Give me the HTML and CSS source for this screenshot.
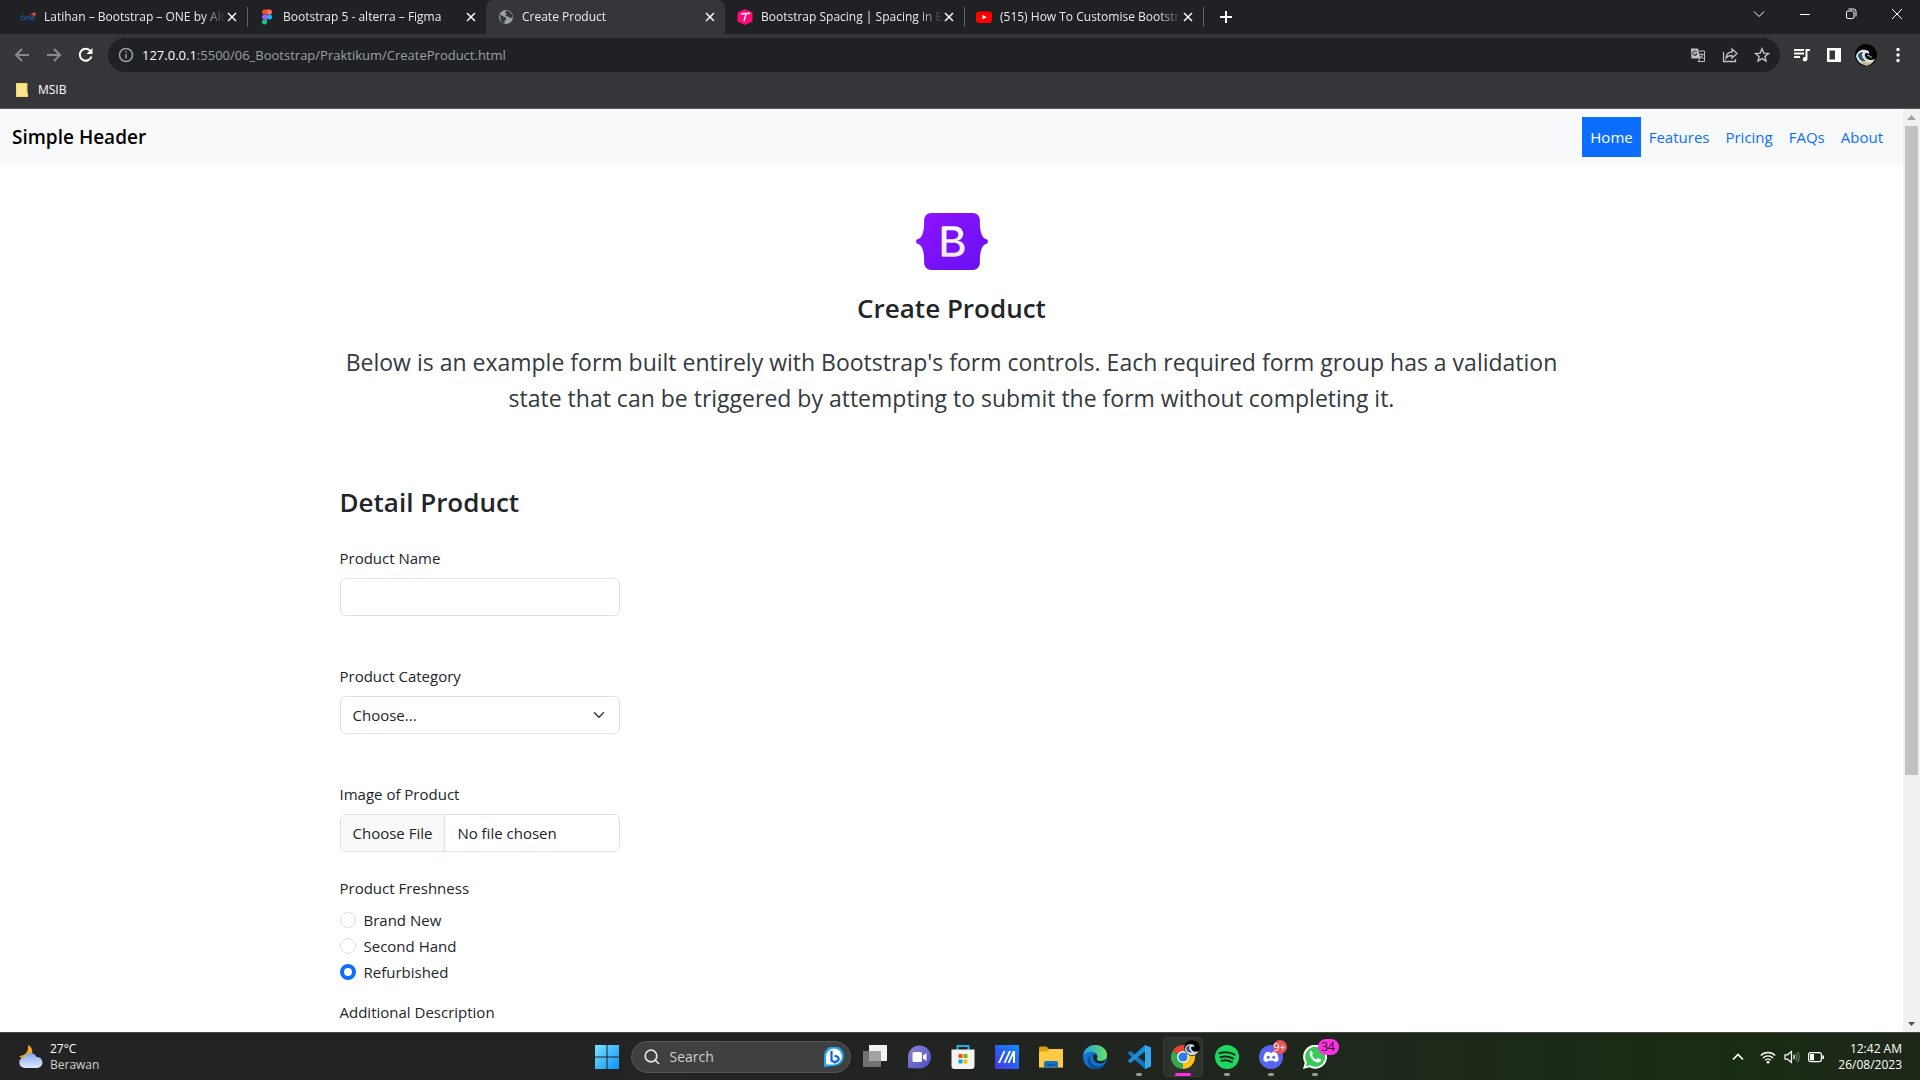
FILE: index.html
```html
<!DOCTYPE html>
<html lang="en">
<head>
<meta charset="utf-8">
<meta name="viewport" content="width=device-width, initial-scale=1">
<title>Create Product</title>
<link rel="stylesheet" href="styles.css">
</head>
<body>
<div class="tabstrip">
  <div class="tab">
    <svg class="favicon" viewBox="0 0 16 16"><g fill="none" stroke="#1f4675" stroke-width="1.6"><circle cx="3" cy="9" r="2"/><path d="M6.8 11.500V9a1.600 1.600 0 0 1 3.200 0v2.500M11.500 9h3.300a1.700 1.700 0 1 0-.8 1.800"/></g><path d="M10 5.500 15.500 3v4z" fill="#e0533a"/></svg>
    <button class="tab-title">Latihan – Bootstrap – ONE by Alt</button>
    <button class="tab-close" aria-label="Close tab"><svg viewBox="0 0 10 10"><path d="m1 1 8 8M9 1 1 9"/></svg></button>
  </div>
  <div class="tab divided">
    <svg class="favicon" viewBox="0 0 16 16"><path d="M3 3a2.500 2.500 0 0 1 2.500-2.500H8v5H5.500A2.500 2.500 0 0 1 3 3z" fill="#f24e1e"/><path d="M8 .5h2.500a2.500 2.500 0 0 1 0 5H8z" fill="#ff7262"/><path d="M3 8a2.500 2.500 0 0 1 2.500-2.500H8v5H5.500A2.500 2.500 0 0 1 3 8z" fill="#a259ff"/><circle cx="10.500" cy="8" r="2.500" fill="#1abcfe"/><path d="M3 13a2.500 2.500 0 0 1 2.500-2.500H8V13a2.500 2.500 0 0 1-5 0z" fill="#0acf83"/></svg>
    <button class="tab-title">Bootstrap 5 - alterra – Figma</button>
    <button class="tab-close" aria-label="Close tab"><svg viewBox="0 0 10 10"><path d="m1 1 8 8M9 1 1 9"/></svg></button>
  </div>
  <div class="tab active">
    <svg class="favicon" viewBox="0 0 16 16"><circle cx="8" cy="8" r="7" fill="#9aa0a6"/><path d="M2.500 5.500 6 8l2 .5v2L6.500 12v2.500C3.500 14 1.500 11 2.500 5.500zM8.500 1.500 7 3.500l1.500 1L7.500 7l2.500.5 2 1.500 2.500-.5C14.800 5 12 2 8.500 1.500z" fill="#35363a"/></svg>
    <button class="tab-title">Create Product</button>
    <button class="tab-close" aria-label="Close tab"><svg viewBox="0 0 10 10"><path d="m1 1 8 8M9 1 1 9"/></svg></button>
  </div>
  <div class="tab">
    <svg class="favicon" viewBox="0 0 16 16"><path d="m8 0 7.500 3.500v9L8 16 .5 12.500v-9z" fill="#ff0a78"/><path d="M4 5.500C6 3.500 9 5.500 13 4M9 4.800 7 12" fill="none" stroke="#fff" stroke-width="1.400"/></svg>
    <button class="tab-title">Bootstrap Spacing | Spacing in Bo</button>
    <button class="tab-close" aria-label="Close tab"><svg viewBox="0 0 10 10"><path d="m1 1 8 8M9 1 1 9"/></svg></button>
  </div>
  <div class="tab divided">
    <svg class="favicon" viewBox="0 0 16 16"><rect y="2.500" width="16" height="11.500" rx="3" fill="red"/><path d="m6.500 5.800 4.200 2.400-4.200 2.400z" fill="#fff"/></svg>
    <button class="tab-title">(515) How To Customise Bootstra</button>
    <button class="tab-close" aria-label="Close tab"><svg viewBox="0 0 10 10"><path d="m1 1 8 8M9 1 1 9"/></svg></button>
  </div>
  <button class="new-tab divided" aria-label="New tab"><svg viewBox="0 0 14 14"><path d="M7 1v12M1 7h12"/></svg></button>
  <div class="window-controls">
    <button aria-label="Search tabs"><svg viewBox="0 0 12 12"><path d="m1 3.500 5 5 5-5"/></svg></button>
    <button aria-label="Minimize"><svg viewBox="0 0 12 12"><path d="M1 6.500h10"/></svg></button>
    <button aria-label="Restore"><svg viewBox="0 0 12 12"><rect x="1.500" y="3" width="7.500" height="7.500" rx="1.500"/><path d="M3.500 1h5a2.500 2.500 0 0 1 2.500 2.500V8.500"/></svg></button>
    <button aria-label="Close window"><svg viewBox="0 0 12 12"><path d="m1 1 10 10M11 1 1 11"/></svg></button>
  </div>
</div>

<div class="toolbar">
  <div class="tools nav-tools">
    <button class="dim" aria-label="Back"><svg viewBox="0 0 16 16"><path d="M15 8H2M8 2 2 8l6 6"/></svg></button>
    <button class="dim" aria-label="Forward"><svg viewBox="0 0 16 16"><path d="M1 8h13M8 2l6 6-6 6"/></svg></button>
    <button aria-label="Reload"><svg viewBox="0 0 16 16"><path d="M13.500 9.500A6 6 0 1 1 12.500 4"/><path d="M14.500 1v6h-6z" fill="#fff" stroke="none"/></svg></button>
  </div>
  <div class="omnibox">
    <svg class="info" viewBox="0 0 16 16"><circle cx="8" cy="8" r="6.500"/><path d="M8 7v4.500M8 4.200v1.600"/></svg>
    <span class="host">127.0.0.1</span>
    <input class="url" type="text" aria-label="Address" value=":5500/06_Bootstrap/Praktikum/CreateProduct.html">
    <div class="tools page-tools">
      <button aria-label="Translate"><svg viewBox="0 0 16 16"><path d="M1 1.500h7l2.500 10H1.500z" fill="#bdc1c6" stroke="none"/><path d="M9 4h5.500v10.500H8l2-3M9.500 7.500h4M11.500 6.500v1M13 7.500c-.5 2-1.500 3-3 4M10.500 9l3 3" stroke-width="1"/><path d="M6.800 5A2.200 2.200 0 1 0 7 7H5" stroke="#202124" stroke-width="1"/></svg></button>
      <button aria-label="Share"><svg viewBox="0 0 16 16"><path d="M1.500 5v9.500h12V12M4 11c.5-4 3-6 6-6V2l5 4.500-5 4.500V8.500C7.500 8.500 5.500 9 4 11z" stroke-width="1.300"/></svg></button>
      <button aria-label="Bookmark this tab"><svg viewBox="0 0 16 16"><path d="m8 1.800 1.800 4.300 4.700.4-3.600 3 1.100 4.600L8 11.600l-4 2.500 1.100-4.600-3.600-3 4.700-.4z" stroke-width="1.400"/></svg></button>
    </div>
  </div>
  <div class="tools end-tools">
    <button aria-label="Media controls"><svg viewBox="0 0 16 16"><path d="M0 3h10M0 6.500h10M0 10h6M12.500 12V3H16"/><circle cx="11" cy="12.300" r="2.200" fill="#fff" stroke="none"/></svg></button>
    <button aria-label="Side panel"><svg viewBox="0 0 16 16"><path d="M1 1h14v14H1zM3.500 3.500v9H9v-9z" fill="#fff" fill-rule="evenodd" stroke="none"/></svg></button>
    <button aria-label="Profile"><svg class="avatar" viewBox="0 0 22 22"><circle cx="11" cy="11" r="11" fill="#050505"/><path d="M1 12c1-4 5-7 9-6 3 0 5 2 4 4-2-2-5-1-4 2 1 4 6 5 10 3-2 4-5 6-9 6-5 0-9-4-10-9z" fill="#dfe7e6"/><path d="M3 12c0-3 3-4 5-4-2 3-1 6 3 9-4 1-7-1-8-5z" fill="#2c5678"/><path d="m12 12 2-1 1 2 2 0" fill="none" stroke="#9db7c4" stroke-width="1"/><path d="m5 18 4-1 5 2 4-2-2 3-5 2z" fill="#c9b98d"/></svg></button>
    <button aria-label="Menu"><svg viewBox="0 0 16 16"><g fill="#fff" stroke="none"><circle cx="8" cy="2.500" r="1.700"/><circle cx="8" cy="8" r="1.700"/><circle cx="8" cy="13.500" r="1.700"/></g></svg></button>
  </div>
</div>

<div class="bookmarks">
  <a class="bookmark" href="#"><svg viewBox="0 0 12 14"><path d="M0 0h11v10h1v4H0z" fill="#ffe48f"/><path d="M0 0h11v10h1v4H0z" fill="none" stroke="#e9c74c"/></svg>MSIB</a>
</div>

<div class="viewport">
  <div class="page">
    <header class="header">
      <a class="brand" href="#">Simple Header</a>
      <nav class="nav">
        <a class="nav-link current" href="#">Home</a>
        <a class="nav-link" href="#">Features</a>
        <a class="nav-link" href="#">Pricing</a>
        <a class="nav-link" href="#">FAQs</a>
        <a class="nav-link" href="#">About</a>
      </nav>
    </header>
    <main class="container">
      <section class="intro">
        <svg class="logo" viewBox="0 0 118 94" role="img" aria-label="Bootstrap">
          <defs>
            <linearGradient id="logo-bg" x1="0" y1="0" x2="1" y2="1"><stop offset="0" stop-color="#9013fe"/><stop offset="1" stop-color="#6610f2"/></linearGradient>
            <linearGradient id="logo-letter" x1="0" y1="0" x2="0" y2="1"><stop offset="0" stop-color="#fff"/><stop offset="1" stop-color="#f1e5fc"/></linearGradient>
          </defs>
          <path d="M24.509 0c-6.733 0-11.715 5.893-11.492 12.284.214 6.140-.064 14.092-2.066 20.577C8.943 39.365 5.547 43.485 0 44.014v5.972c5.547.529 8.943 4.649 10.951 11.153 2.002 6.485 2.280 14.437 2.066 20.577C12.794 88.106 17.776 94 24.510 94H93.500c6.733 0 11.714-5.893 11.491-12.284-.214-6.140.064-14.092 2.066-20.577 2.009-6.504 5.396-10.624 10.943-11.153v-5.972c-5.547-.529-8.934-4.649-10.943-11.153-2.002-6.484-2.280-14.437-2.066-20.577C105.214 5.894 100.233 0 93.500 0z" fill="url(#logo-bg)"/>
          <path d="M80 57.863C80 66.663 73.436 72 62.543 72H44a2 2 0 0 1-2-2V24a2 2 0 0 1 2-2h18.437c9.083 0 15.044 4.920 15.044 12.474 0 5.302-4.010 10.049-9.119 10.880v.277C75.317 46.394 80 51.210 80 57.863zM60.521 28.340H49.948v14.934h8.905c6.884 0 10.680-2.772 10.680-7.727 0-4.643-3.264-7.207-9.012-7.207zM49.948 49.200v16.458H60.910c7.167 0 10.964-2.876 10.964-8.281 0-5.406-3.903-8.178-11.425-8.178z" fill="url(#logo-letter)"/>
        </svg>
        <h1 class="title">Create Product</h1>
        <p class="lead">Below is an example form built entirely with Bootstrap's form controls. Each required form group has a validation state that can be triggered by attempting to submit the form without completing it.</p>
      </section>
      <form class="form">
        <h2 class="title">Detail Product</h2>
        <div class="field">
          <label for="name">Product Name</label>
          <input class="control" id="name" type="text">
        </div>
        <div class="field">
          <label for="category">Product Category</label>
          <select class="control select" id="category"><option>Choose...</option></select>
        </div>
        <div class="field">
          <label for="image">Image of Product</label>
          <input class="control file" id="image" type="file">
        </div>
        <fieldset class="choices">
          <legend>Product Freshness</legend>
          <label class="choice"><input type="radio" name="freshness">Brand New</label>
          <label class="choice"><input type="radio" name="freshness">Second Hand</label>
          <label class="choice"><input type="radio" name="freshness" checked>Refurbished</label>
        </fieldset>
        <div class="field">
          <label for="description">Additional Description</label>
          <textarea class="control" id="description" rows="4"></textarea>
        </div>
      </form>
    </main>
  </div>
  <div class="scrollbar" aria-hidden="true">
    <svg viewBox="0 0 17 17"><path d="M4 11h9L8.500 6z" fill="#a3a3a3"/></svg>
    <div class="track"><div class="thumb"></div></div>
    <svg viewBox="0 0 17 17"><path d="M5 7h7l-3.500 4z" fill="#505050"/></svg>
  </div>
</div>

<footer class="taskbar">
  <button class="weather">
    <svg viewBox="0 0 24 24"><defs><linearGradient id="cloud" x1="0" y1="0" x2="0" y2="1"><stop offset="0" stop-color="#7fa6ee"/><stop offset="1" stop-color="#dfe9ff"/></linearGradient></defs><path d="M9 0c5 2 5 8 3 11s-8 4-12 0c6 0 10-4 9-11z" fill="#f5a81c"/><path d="M6 23a5.500 5.500 0 0 1-.5-11A6.500 6.500 0 0 1 17.500 12 5.500 5.500 0 0 1 18.500 23z" fill="url(#cloud)"/></svg>
    <span class="lines"><span>27°C</span><span class="soft">Berawan</span></span>
  </button>
  <div class="apps">
    <button class="app" aria-label="Start"><svg viewBox="0 0 24 24"><defs><linearGradient id="win" x1="0" y1="0" x2="1" y2="1"><stop offset="0" stop-color="#7ce0ff"/><stop offset="1" stop-color="#0a93f5"/></linearGradient></defs><path d="M0 0h11.500v11.500H0zM12.500 0H24v11.500H12.500zM0 12.500h11.500V24H0zM12.500 12.500H24V24H12.500z" fill="url(#win)"/></svg></button>
    <div class="search">
      <svg class="glass" viewBox="0 0 16 16"><circle cx="7" cy="7" r="5.800"/><path d="m11 11 4 4"/></svg>
      <input type="search" aria-label="Search" placeholder="Search">
      <svg class="bing" viewBox="0 0 20 20"><path d="M0 20V10a10 10 0 1 1 10 9z" fill="#1aa5f0"/><path d="M2 17.500V10a8 8 0 1 1 8 7.500z" fill="#fff"/><path d="M7.500 4v9.500l3.500 2 3.500-2.500c1-2-1-3.500-4-4.500" fill="none" stroke="#1763d8" stroke-width="2.200"/></svg>
    </div>
    <button class="app" aria-label="Task view"><svg viewBox="0 0 24 24"><path d="M6 0h18v16H6z" fill="#f2f2f2"/><path d="M0 6h18v16H0z" fill="#727272"/><path d="M6 6h12v10H6z" fill="#a3a3a3"/></svg></button>
    <button class="app" aria-label="Chat"><svg viewBox="0 0 24 24"><defs><linearGradient id="chat" x1="0" y1="0" x2="1" y2="1"><stop offset="0" stop-color="#8f86d0"/><stop offset="1" stop-color="#4a4bc4"/></linearGradient></defs><path d="M1 23V12A11.500 11.500 0 1 1 12 23.500z" fill="url(#chat)"/><rect x="5.500" y="7" width="9.500" height="10" rx="1.500" fill="#fff"/><path d="m16 10.500 3.500-2.500v8L16 13.500z" fill="#fff"/></svg></button>
    <button class="app" aria-label="Microsoft Store"><svg viewBox="0 0 24 24"><path d="M6.500 5V1h11v4" fill="none" stroke="#23aeea" stroke-width="2"/><path d="M.5 4.500h23V21a3 3 0 0 1-3 3h-17a3 3 0 0 1-3-3z" fill="#f3f3f3"/><path d="M7.500 9h4v4h-4z" fill="#f25022"/><path d="M12.500 9h4v4h-4z" fill="#7fba00"/><path d="M7.500 14.500h4v4h-4z" fill="#00a4ef"/><path d="M12.500 14.500h4v4h-4z" fill="#ffb900"/></svg></button>
    <button class="app" aria-label="MyASUS"><svg viewBox="0 0 24 24"><defs><linearGradient id="asus" x1="0" y1="1" x2="1" y2="0"><stop offset="0" stop-color="#4334e8"/><stop offset="1" stop-color="#118dff"/></linearGradient></defs><path d="M0 0h24v24H0z" fill="url(#asus)"/><path d="m3 18 5.500-12h2L5 18zM8.500 18 14 6h2l-5.500 12zM12.500 18 18 6h2v12h-2v-7.500L14.500 18z" fill="#fff"/></svg></button>
    <button class="app" aria-label="File Explorer"><svg viewBox="0 0 24 24"><path d="M0 8V3a1.500 1.500 0 0 1 1.500-1.500h6L10 4v4z" fill="#e09c10"/><path d="M0 6.500h8L10.500 4H24v18.500H0z" fill="#fdcb45"/><path d="M5 22.500V18a2 2 0 0 1 2-2h10a2 2 0 0 1 2 2v4.500z" fill="#1372c4"/><path d="M8 19h8v1.500H8z" fill="#0b4f94"/></svg></button>
    <button class="app" aria-label="Edge"><svg viewBox="0 0 24 24"><defs><linearGradient id="edge" x1="0" y1="0" x2="1" y2="0"><stop offset="0" stop-color="#229ee8"/><stop offset="1" stop-color="#66e05c"/></linearGradient></defs><circle cx="12" cy="12" r="12" fill="#1273cc"/><path d="M0 11C1 4 6 0 12 0c7 0 12 4.500 12 10 0 4-3 6-6.500 6-3 0-4.500-1.500-3.500-3 2-4-3-7-7-6C3 7.500 1 9 0 11z" fill="url(#edge)"/><path d="M8 10c-3 5 1 11 7 11.500 3 0 5-1 7.500-3-4 6.500-11 6.500-15 3.500C3 18.500 4 12 8 10z" fill="#0c4f99"/><path d="M10.500 9.500c2-1 5 1 3.500 3.500-1 1.500.5 3 3.500 3 2 0 4-.5 5.500-2-.5 3-3 4.500-6 4.500-5 0-8.500-5-6.500-9z" fill="#20241e"/></svg></button>
    <button class="app running" aria-label="Visual Studio Code"><svg viewBox="0 0 24 24"><path d="M1 7.500 3.500 6 18 17.500V24L1.500 9z" fill="#1279bd"/><path d="M1 16.500 3.500 18 18 6.500V0L1.500 15z" fill="#1b8ed8"/><path d="m18 0 6 2.500v19L18 24z" fill="#35a8f0"/></svg></button>
    <button class="app running focused" aria-label="Chrome"><svg viewBox="0 0 24 24"><path d="M12 12 1.600 6A12 12 0 0 1 22.400 6z" fill="#ea4335"/><path d="M12 12 22.400 6A12 12 0 0 1 12 24z" fill="#fbc116"/><path d="M12 12v12A12 12 0 0 1 1.600 6z" fill="#34a853"/><circle cx="12" cy="12" r="6" fill="#fff"/><circle cx="12" cy="12" r="4.600" fill="#2a7de9"/></svg><svg class="badge profile" viewBox="0 0 22 22"><circle cx="11" cy="11" r="11" fill="#050505"/><path d="M1 12c1-4 5-7 9-6 3 0 5 2 4 4-2-2-5-1-4 2 1 4 6 5 10 3-2 4-5 6-9 6-5 0-9-4-10-9z" fill="#cfdcdf"/><path d="M3 12c0-3 3-4 5-4-2 3-1 6 3 9-4 1-7-1-8-5z" fill="#2c5678"/></svg></button>
    <button class="app running" aria-label="Spotify"><svg viewBox="0 0 24 24"><circle cx="12" cy="12" r="12" fill="#1ed760"/><path d="M4.500 8.300C9.500 6.800 15.500 7.300 19.500 9.700M5.500 12.200c4.500-1.200 9-.8 12.700 1.400M6.500 15.800c3.500-1 7.500-.6 10.500 1.200" fill="none" stroke="#152a1b" stroke-width="2" stroke-linecap="round"/></svg></button>
    <button class="app running" aria-label="Discord"><svg viewBox="0 0 24 24"><circle cx="12" cy="12" r="12" fill="#5865f2"/><path d="M6.500 7.500 10 6.500l.7 1.200h2.600l.7-1.200 3.500 1c1.500 2.500 2.200 5 2 8-1.500 1.200-2.500 1.500-3.500 1.800l-1-1.500H9l-1 1.500c-1-.3-2-.6-3.500-1.800-.2-3 .5-5.500 2-8z" fill="#fff"/><circle cx="9.300" cy="12.300" r="1.500" fill="#5865f2"/><circle cx="14.700" cy="12.300" r="1.500" fill="#5865f2"/></svg><span class="badge alert">9+</span></button>
    <button class="app running" aria-label="WhatsApp"><svg viewBox="0 0 24 24"><path d="m0 24 1.700-6.200A12 12 0 1 1 6.300 22.300z" fill="#fff"/><path d="m2.800 21.200 1.100-3.800a10 10 0 1 1 3 2.900z" fill="#38c956"/><path d="M7 6.500c1-1 2-.5 2.500 1l.5 1.500-1 1.500c1 2 2.500 3.300 4.500 4l1.500-1.500 3 1.500c.3 2-1.500 3-3.500 3C10 17 5.500 11 7 6.500z" fill="#fff"/></svg><span class="badge count">34</span></button>
  </div>
  <div class="tray">
    <button class="tray-more" aria-label="Show hidden icons"><svg viewBox="0 0 16 16"><path d="m3 10.500 5-5 5 5" stroke-width="1.700"/></svg></button>
    <button class="tray-status" aria-label="Network, volume and battery">
      <svg viewBox="0 0 16 16"><path d="M.8 6.500a10.200 10.200 0 0 1 14.400 0M3 9a7 7 0 0 1 10 0M5.200 11.300a4 4 0 0 1 5.600 0" stroke-width="1.300"/><circle cx="8" cy="13.200" r="1.400" fill="#fff" stroke="none"/></svg>
      <svg viewBox="0 0 16 16"><path d="M1 5.800h2.500L7.500 2.500v11l-4-3.300H1zM9.500 6a3 3 0 0 1 0 4"/><path d="M11.500 4.500a5.500 5.500 0 0 1 0 7M13.500 3a8 8 0 0 1 0 10" stroke="#72806d"/></svg>
      <svg viewBox="0 0 16 16"><rect x=".6" y="3.600" width="12.800" height="9" rx="2"/><path d="M2 5h4v6.200H2zM14.300 6.500H16v3.500h-1.700z" fill="#fff" stroke="none"/></svg>
    </button>
    <button class="clock lines"><span>12:42 AM</span><span>26/08/2023</span></button>
  </div>
</footer>
</body>
</html>
```
FILE: styles.css
```css
*, *::before, *::after { box-sizing: border-box; }

body {
  margin: 0;
  height: 100vh;
  display: flex;
  flex-direction: column;
  overflow: hidden;
  font: 15px/24px "Segoe UI", "Open Sans", "Noto Sans", sans-serif;
  color: #212529;
  background: #fff;
}

button { padding: 0; border: 0; background: none; color: inherit; font: inherit; }
a { color: inherit; text-decoration: none; }
svg { display: block; flex: none; }

/* Tab strip */
.tabstrip { display: flex; flex: none; height: 34px; padding-left: 8px; background: #202124; color: #e8eaed; }
.tab { position: relative; display: flex; align-items: center; width: 239px; padding: 0 9px 0 12px; }
.tab.active { background: #35363a; border-radius: 8px 8px 0 0; }
.divided::before { content: ""; position: absolute; left: 0; top: 7px; width: 1px; height: 20px; background: #5f6368; }
.favicon { width: 16px; height: 16px; margin-right: 8px; }
.tab-title {
  flex: 1;
  min-width: 0;
  overflow: hidden;
  text-align: left;
  font-size: 12px;
  line-height: 16px;
  white-space: nowrap;
  -webkit-mask-image: linear-gradient(90deg, #000 calc(100% - 24px), transparent);
  mask-image: linear-gradient(90deg, #000 calc(100% - 24px), transparent);
}
.tab-close { width: 12px; height: 12px; display: grid; place-items: center; }
.tab-close svg { width: 10px; height: 10px; }
.new-tab { position: relative; width: 46px; display: grid; place-items: center; }
.new-tab svg { width: 14px; height: 14px; }
.tab-close path, .new-tab path { fill: none; stroke: #fff; stroke-width: 2; }
.tab-close path { stroke-width: 1.500; }
.window-controls { display: flex; margin-left: auto; height: 28px; }
.window-controls button { width: 46px; display: grid; place-items: center; }
.window-controls svg { width: 12px; height: 12px; fill: none; stroke: #fff; stroke-width: 1; }

/* Address bar */
.toolbar { display: flex; flex: none; align-items: center; height: 42px; background: #35363a; }
.tools { display: flex; }
.tools button { width: 32px; height: 32px; display: grid; place-items: center; }
.tools svg { width: 16px; height: 16px; fill: none; stroke: #fff; stroke-width: 2; }
.tools .dim svg { stroke: #87898c; }
.tools .avatar { width: 22px; height: 22px; stroke: none; }
.nav-tools { padding: 0 6px; }
.end-tools { padding: 0 6px; }
.page-tools svg { stroke: #bdc1c6; }
.omnibox { flex: 1; display: flex; align-items: center; height: 34px; padding: 0 2px 0 10px; border-radius: 17px; background: #202124; font-size: 13px; }
.info { width: 16px; height: 16px; margin-right: 8px; fill: none; stroke: #9aa0a6; stroke-width: 1.500; }
.host { color: #fff; }
.url { flex: 1; min-width: 0; padding: 0; border: 0; outline: 0; background: none; color: #9aa0a6; font: inherit; }

.bookmarks { display: flex; flex: none; height: 33px; padding-left: 16px; border-bottom: 1px solid #5a5559; background: #35363a; color: #fff; }
.bookmark { display: flex; align-items: center; gap: 10px; height: 27px; font-size: 12px; }
.bookmark svg { width: 12px; height: 14px; }

/* Page */
.viewport { flex: 1; min-height: 0; display: flex; }
.page { flex: 1; min-width: 0; overflow: hidden; }
.header { display: flex; align-items: center; justify-content: space-between; padding: 8px 12px; background: #f8f9fa; }
.brand { color: #000; font-size: 19px; font-weight: 600; line-height: 30px; }
.nav { display: flex; }
.nav-link { padding: 8px; color: #0d6efd; }
.nav-link.current { background: #0d6efd; color: #fff; }

.container { max-width: 1320px; margin: 0 auto; padding: 0 48px; }
.intro { padding: 48px 0; text-align: center; }
.logo { width: 72px; height: 57px; margin: 0 auto 20px; }
.title { margin: 0 0 18px; font-size: 26px; font-weight: 600; line-height: 36px; }
.lead { margin: 0; font-size: 23px; line-height: 36px; color: #343a40; }

.form { padding-top: 20px; }
.form .title { margin-bottom: 26px; }
.field { width: 280px; margin-bottom: 48px; }
.field > label { display: block; margin-bottom: 8px; }
.control { display: block; width: 100%; min-height: 38px; padding: 6px 12px; border: 1px solid #dee2e6; border-radius: 6px; background: #fff; color: #212529; font: inherit; }
.select {
  appearance: none;
  background: #fff url("data:image/svg+xml,%3Csvg xmlns='http://www.w3.org/2000/svg' viewBox='0 0 16 16'%3E%3Cpath fill='none' stroke='%23343a40' stroke-linecap='round' stroke-linejoin='round' stroke-width='2' d='m2 5 6 6 6-6'/%3E%3C/svg%3E") no-repeat right 12px center / 16px 12px;
}
.file { height: 38px; overflow: hidden; }
.file::file-selector-button { margin: -6px 12px -6px -12px; padding: 6px 12px; border: 0; border-right: 1px solid #dee2e6; background: #f8f9fa; color: #212529; font: inherit; }
.choices { margin: -24px 0 14px; padding: 0; border: 0; }
.choices legend { padding: 0; margin-bottom: 8px; }
.choice { display: flex; align-items: center; gap: 8px; margin-bottom: 2px; }
.choice input { appearance: none; width: 16px; height: 16px; margin: 0; border: 1px solid #dee2e6; border-radius: 50%; background: #fff; }
.choice input:checked { border: 4px solid #0d6efd; }

.scrollbar { flex: none; display: flex; flex-direction: column; width: 17px; background: #f1f1f1; }
.scrollbar svg { width: 17px; height: 17px; }
.track { flex: 1; padding: 0 2px; }
.thumb { height: 73%; background: #c1c1c1; }

/* Taskbar */
.taskbar { display: grid; grid-template-columns: 1fr auto 1fr; flex: none; align-items: center; height: 48px; padding: 0 18px 0 19px; border-top: 1px solid #484848; background: linear-gradient(90deg, #232323 0 30%, #20251f 60%, #192c13 90%, #1d2719); color: #fff; font-size: 12px; }
.lines { display: flex; flex-direction: column; line-height: 16px; }
.weather { display: flex; align-items: center; gap: 7px; text-align: left; }
.weather svg { width: 24px; height: 24px; }
.soft { color: #d0d0d0; }
.apps { display: flex; align-items: center; gap: 4px; }
.app { position: relative; width: 40px; height: 40px; display: grid; place-items: center; border-radius: 4px; }
.app svg { width: 24px; height: 24px; }
.search { display: flex; align-items: center; gap: 10px; width: 220px; height: 32px; padding: 0 6px 0 12px; border: 1px solid #555; border-radius: 16px; background: #404040; }
.search input { flex: 1; min-width: 0; padding: 0; border: 0; outline: 0; background: none; color: #fff; font: inherit; font-size: 14px; }
.search input::placeholder { color: #cfcfcf; opacity: 1; }
.glass { width: 16px; height: 16px; fill: none; stroke: #e4e4e4; stroke-width: 1.700; }
.bing { width: 20px; height: 20px; }
.running::after { content: ""; position: absolute; bottom: 1px; left: 17px; width: 6px; height: 3px; border-radius: 2px; background: #999; }
.focused { border: 1px solid #363b35; background: #2d322c; }
.focused::after { bottom: 0; left: 11px; width: 16px; background: #ff2fe6; }
.badge { position: absolute; display: grid; place-items: center; border-radius: 8px; font-size: 11px; line-height: 14px; }
.app .profile { top: 2px; right: 2px; width: 16px; height: 16px; }
.alert { top: 3px; right: 4px; width: 14px; height: 14px; background: #e8505b; }
.count { top: 2px; right: -4px; width: 21px; height: 16px; background: #ff2fe6; color: #111; font-size: 12px; }
.tray { display: flex; justify-content: flex-end; align-items: center; gap: 14px; }
.tray svg { width: 16px; height: 16px; fill: none; stroke: #fff; stroke-width: 1.200; }
.tray-status { display: flex; gap: 8px; }
.clock { text-align: right; }
```
